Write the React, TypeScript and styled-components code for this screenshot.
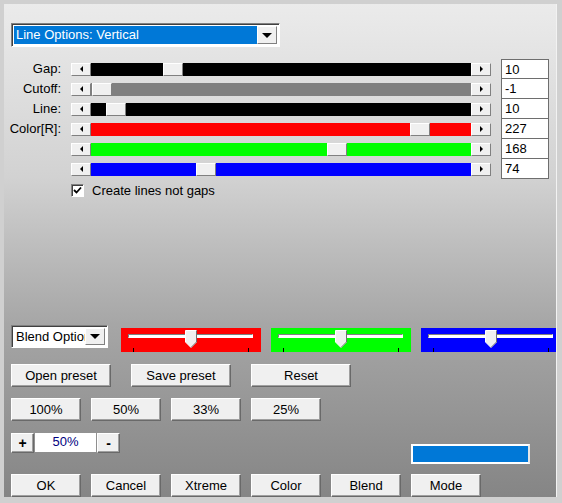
import React from 'react';
import styled, { createGlobalStyle } from 'styled-components';

const GlobalStyle = createGlobalStyle`
  html, body {
    margin: 0;
    padding: 0;
    background: #d0d0d0;
    font-family: "Liberation Sans", Arial, sans-serif;
    font-size: 13px;
  }
`;

const Panel = styled.div`
  width: 553px;
  height: 493px;
  margin: 4px 0 0 4px;
  border-right: 1px solid #f2f2f2;
  background: linear-gradient(#ebebeb 0%, #d2d2d2 35%, #a6a6a6 65%, #858585 100%);
  padding: 19px 0 0 7px;
  box-sizing: border-box;
  overflow: hidden;
  display: flex;
  flex-direction: column;
`;

const Combo = styled.div<{ $w: number }>`
  width: ${p => p.$w}px;
  height: 23px;
  box-sizing: border-box;
  background: #fff;
  border: 1px solid;
  border-color: #808080 #fff #fff #808080;
  box-shadow: inset 1px 1px #404040;
  display: flex;
  padding: 2px;
`;

const ComboField = styled.div<{ $selected?: boolean }>`
  flex: 1;
  min-width: 0;
  overflow: hidden;
  white-space: nowrap;
  line-height: 17px;
  padding-left: 2px;
  background: ${p => (p.$selected ? '#0078d7' : '#fff')};
  color: ${p => (p.$selected ? '#fff' : '#000')};
`;

const ComboButton = styled.div`
  width: 20px;
  box-sizing: border-box;
  background: #f0f0f0;
  border: 1px solid;
  border-color: #fff #808080 #808080 #fff;
  display: flex;
  align-items: center;
  justify-content: center;
  &::after {
    content: '';
    border-left: 5px solid transparent;
    border-right: 5px solid transparent;
    border-top: 5px solid #000;
  }
`;

const SliderGrid = styled.div`
  margin: 12px 0 0 -7px;
  display: grid;
  grid-template-columns: 57px 420px 48px;
  column-gap: 10px;
  grid-auto-rows: 20px;
`;

const Label = styled.div`
  text-align: right;
  white-space: nowrap;
  line-height: 20px;
  color: #000;
`;

const ScrollBar = styled.div`
  align-self: center;
  height: 13px;
  display: flex;
`;

const ArrowButton = styled.div<{ $dir: 'left' | 'right' }>`
  width: 20px;
  height: 13px;
  box-sizing: border-box;
  background: #f0f0f0;
  border: 1px solid;
  border-color: #fff #808080 #808080 #fff;
  display: flex;
  align-items: center;
  justify-content: center;
  &::after {
    content: '';
    border-top: 3px solid transparent;
    border-bottom: 3px solid transparent;
    ${p => (p.$dir === 'left' ? 'border-right: 3px solid #000;' : 'border-left: 3px solid #000;')}
  }
`;

const Track = styled.div<{ $color: string }>`
  position: relative;
  flex: 1;
  background: ${p => p.$color};
`;

const Thumb = styled.div`
  position: absolute;
  top: 0;
  width: 20px;
  height: 13px;
  box-sizing: border-box;
  background: #f0f0f0;
  border: 1px solid;
  border-color: #fff #808080 #808080 #fff;
`;

const ValueBox = styled.div`
  height: 21px;
  box-sizing: border-box;
  background: #fff;
  border: 1px solid #6e6e6e;
  padding-left: 3px;
  line-height: 19px;
  color: #000;
  margin-top: -1px;
`;

const CheckRow = styled.label`
  margin: 4px 0 0 60px;
  display: flex;
  align-items: center;
  gap: 8px;
  color: #000;
`;

const CheckBox = styled.div`
  width: 13px;
  height: 13px;
  box-sizing: border-box;
  background: #fff;
  border: 1px solid;
  border-color: #808080 #fff #fff #808080;
  box-shadow: inset 1px 1px #404040;
  display: flex;
  align-items: center;
  justify-content: center;
`;

const BlendRow = styled.div`
  margin-top: 127px;
  display: flex;
  align-items: flex-start;
  gap: 10px;
`;

const TrackBox = styled.div<{ $color: string }>`
  position: relative;
  flex: none;
  width: 140px;
  height: 24px;
  margin-top: 3px;
  background: ${p => p.$color};
`;

const Groove = styled.div`
  position: absolute;
  left: 7px;
  right: 8px;
  top: 6px;
  height: 4px;
  box-sizing: border-box;
  background: #fff;
  border: 1px solid;
  border-color: #808080 #fff #fff #808080;
`;

const Tick = styled.div<{ $x: number }>`
  position: absolute;
  left: ${p => p.$x}px;
  top: 20px;
  width: 1px;
  height: 4px;
  background: #000;
`;

const ButtonRow = styled.div<{ $gap: number; $top: number }>`
  margin-top: ${p => p.$top}px;
  display: flex;
  gap: ${p => p.$gap}px;
  align-items: flex-start;
`;

const Button = styled.button<{ $w: number; $h?: number }>`
  width: ${p => p.$w}px;
  height: ${p => p.$h ?? 23}px;
  padding: 0;
  box-sizing: border-box;
  background: #f0f0f0;
  border: 1px solid;
  border-color: #fff #696969 #696969 #fff;
  box-shadow: inset -1px -1px #a0a0a0;
  font-family: "Liberation Sans", Arial, sans-serif;
  font-size: 13px;
  color: #000;
  cursor: default;
`;

const SmallButton = styled(Button)`
  font-weight: bold;
  font-size: 14px;
`;

const ZoomField = styled.div`
  width: 61px;
  height: 19px;
  background: #fff;
  color: #000080;
  text-align: center;
  line-height: 18px;
`;

const Swatch = styled.div`
  margin-left: auto;
  margin-right: 26px;
  align-self: flex-end;
  width: 119px;
  height: 20px;
  box-sizing: border-box;
  border: 2px solid #fff;
  border-right-color: #e6e6e6;
  background: #0078d7;
`;

type SliderRow = { label: string; color: string; thumb: number; value: string };

const rows: SliderRow[] = [
  { label: 'Gap:', color: '#000', thumb: 72, value: '10' },
  { label: 'Cutoff:', color: '#808080', thumb: 1, value: '-1' },
  { label: 'Line:', color: '#000', thumb: 15, value: '10' },
  { label: 'Color[R]:', color: '#ff0000', thumb: 319, value: '227' },
  { label: '', color: '#00ff00', thumb: 236, value: '168' },
  { label: '', color: '#0000ff', thumb: 105, value: '74' },
];

const ColorTrack = ({ color }: { color: string }) => (
  <TrackBox $color={color}>
    <Groove />
    <Tick $x={12} />
    <Tick $x={127} />
    <svg width="12" height="18" viewBox="0 0 12 18" style={{ position: 'absolute', left: 64, top: 2 }}>
      <path d="M0.5 0.5 H11.5 V12 L6 17.5 L0.5 12 Z" fill="#f0f0f0" stroke="#fff" />
      <path d="M11.5 0.5 V12 L6 17.5" fill="none" stroke="#707070" />
    </svg>
  </TrackBox>
);

const App = () => {
  return (
    <>
      <GlobalStyle />
      <Panel>
        <Combo $w={269} style={{ height: 24 }}>
          <ComboField $selected>Line Options: Vertical</ComboField>
          <ComboButton />
        </Combo>

        <SliderGrid>
          {rows.map((r, i) => (
            <React.Fragment key={i}>
              <Label>{r.label}</Label>
              <ScrollBar>
                <ArrowButton $dir="left" />
                <Track $color={r.color}>
                  <Thumb style={{ left: r.thumb }} />
                </Track>
                <ArrowButton $dir="right" />
              </ScrollBar>
              <ValueBox style={i === 0 ? { marginTop: 0, height: 20 } : undefined}>{r.value}</ValueBox>
            </React.Fragment>
          ))}
        </SliderGrid>

        <CheckRow>
          <CheckBox>
            <svg width="9" height="9" viewBox="0 0 9 9">
              <path d="M1 4 L3.5 6.5 L8 1.5" fill="none" stroke="#000" strokeWidth="1.8" />
            </svg>
          </CheckBox>
          Create lines not gaps
        </CheckRow>

        <BlendRow>
          <Combo $w={97} style={{ marginRight: 3 }}>
            <ComboField>Blend Options</ComboField>
            <ComboButton />
          </Combo>
          <ColorTrack color="#ff0000" />
          <ColorTrack color="#00ff00" />
          <ColorTrack color="#0000ff" />
        </BlendRow>

        <ButtonRow $gap={20} $top={12}>
          <Button $w={100}>Open preset</Button>
          <Button $w={100}>Save preset</Button>
          <Button $w={100}>Reset</Button>
        </ButtonRow>

        <ButtonRow $gap={10} $top={11}>
          <Button $w={70}>100%</Button>
          <Button $w={70}>50%</Button>
          <Button $w={70}>33%</Button>
          <Button $w={70}>25%</Button>
        </ButtonRow>

        <ButtonRow $gap={1} $top={12} style={{ height: 31 }}>
          <SmallButton $w={23} $h={20}>+</SmallButton>
          <ZoomField>50%</ZoomField>
          <SmallButton $w={23} $h={20}>-</SmallButton>
          <Swatch />
        </ButtonRow>

        <ButtonRow $gap={10} $top={10}>
          <Button $w={70}>OK</Button>
          <Button $w={70}>Cancel</Button>
          <Button $w={70}>Xtreme</Button>
          <Button $w={70}>Color</Button>
          <Button $w={70}>Blend</Button>
          <Button $w={70}>Mode</Button>
        </ButtonRow>
      </Panel>
    </>
  );
};

export default App;
